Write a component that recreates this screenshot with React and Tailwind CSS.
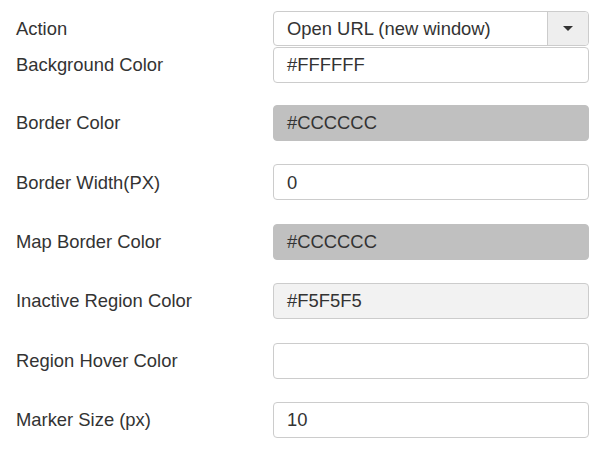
import React from "react";

const rows = [
  { label: "Border Color", value: "#CCCCCC", bg: "bg-[#c0c0c0]", border: "border-[#c0c0c0]" },
  { label: "Border Width(PX)", value: "0" },
  { label: "Map Border Color", value: "#CCCCCC", bg: "bg-[#c0c0c0]", border: "border-[#c0c0c0]" },
  { label: "Inactive Region Color", value: "#F5F5F5", bg: "bg-[#f2f2f2]" },
  { label: "Region Hover Color", value: "" },
  { label: "Marker Size (px)", value: "10" },
];

function Field({ value, bg = "bg-white", border = "border-[#ccc]" }) {
  return (
    <div
      className={`w-[316px] h-[36px] rounded-[4px] border ${border} ${bg} flex items-center px-[13px] text-[#333]`}
    >
      {value}
    </div>
  );
}

export default function App() {
  return (
    <div
      className="bg-white w-[607px] h-[457px] text-[18.4px] text-[#333]"
      style={{ fontFamily: '"Liberation Sans", Arial, sans-serif' }}
    >
      <div className="pl-[16px] pt-[11px]">
        <div className="flex items-center h-[35px]">
          <span className="w-[257px]">Action</span>
          <div className="w-[316px] h-[35px] rounded-[4px] border border-[#ccc] bg-white flex">
            <span className="flex-1 flex items-center px-[13px]">Open URL (new window)</span>
            <span className="w-[41px] border-l border-[#ccc] bg-[#eee] rounded-r-[4px] flex items-center justify-center">
              <span className="w-0 h-0 border-l-[5px] border-r-[5px] border-t-[5px] border-l-transparent border-r-transparent border-t-[#333]" />
            </span>
          </div>
        </div>
        <div className="flex items-center h-[35px] mt-[1px]">
          <span className="w-[257px]">Background Color</span>
          <Field value="#FFFFFF" />
        </div>
        {rows.map((r, i) => (
          <div key={i} className={`flex items-center h-[36px] ${i === 0 ? "mt-[23px]" : "mt-[23.4px]"}`}>
            <span className="w-[257px]">{r.label}</span>
            <Field value={r.value} bg={r.bg} border={r.border} />
          </div>
        ))}
      </div>
    </div>
  );
}
